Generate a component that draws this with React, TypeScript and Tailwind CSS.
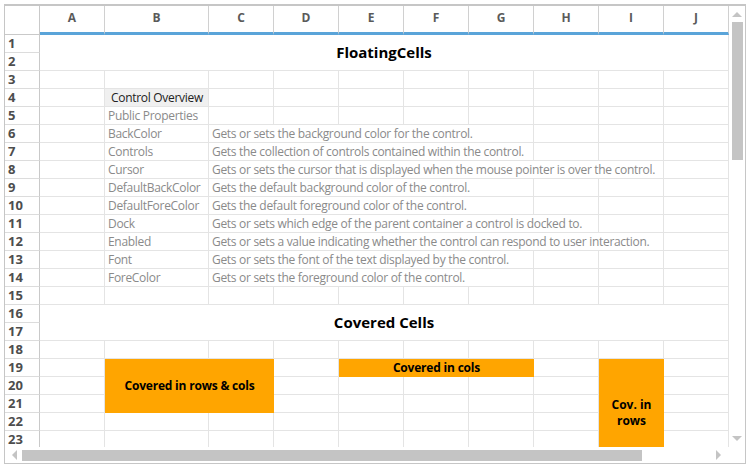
import React from "react";

const font = "font-['Segoe_UI','Open_Sans',sans-serif]";
const letters = ["A", "B", "C", "D", "E", "F", "G", "H", "I", "J"];

const props: [string, string, string][] = [
  ["BackColor", "Gets or sets the background color for the control.", "col-span-5"],
  ["Controls", "Gets the collection of controls contained within the control.", "col-span-5"],
  ["Cursor", "Gets or sets the cursor that is displayed when the mouse pointer is over the control.", "col-span-7"],
  ["DefaultBackColor", "Gets the default background color of the control.", "col-span-5"],
  ["DefaultForeColor", "Gets the default foreground color of the control.", "col-span-5"],
  ["Dock", "Gets or sets which edge of the parent container a control is docked to.", "col-span-6"],
  ["Enabled", "Gets or sets a value indicating whether the control can respond to user interaction.", "col-span-7"],
  ["Font", "Gets or sets the font of the text displayed by the control.", "col-span-5"],
  ["ForeColor", "Gets or sets the foreground color of the control.", "col-span-5"],
];
const spanLeft: Record<string, number> = { "col-span-5": 3, "col-span-6": 2, "col-span-7": 1 };

function RowHead({ n }: { n: number }) {
  return (
    <div className="flex items-center border-r border-b border-r-[#c9c9c9] border-b-[#dcdcdc] pl-[3px] text-[13px] font-bold text-[#4d4d4d]">
      {n}
    </div>
  );
}

function Cell({ className = "", children }: { className?: string; children?: React.ReactNode }) {
  return (
    <div className={`flex items-center border-r border-b border-[#e4e4e4] ${className}`}>{children}</div>
  );
}

function Empties({ count }: { count: number }) {
  return (
    <>
      {Array.from({ length: count }).map((_, i) => (
        <Cell key={i} />
      ))}
    </>
  );
}

function Tri({ dir }: { dir: "up" | "down" | "left" | "right" }) {
  const pts = {
    up: "0,5 5,0 10,5",
    down: "0,0 5,5 10,0",
    left: "5,0 0,5 5,10",
    right: "0,0 5,5 0,10",
  }[dir];
  const vertical = dir === "up" || dir === "down";
  return (
    <svg width={vertical ? 10 : 5} height={vertical ? 5 : 10} viewBox={vertical ? "0 0 10 5" : "0 0 5 10"}>
      <polygon points={pts} fill="#c4c4c4" />
    </svg>
  );
}

export default function App() {
  return (
    <div className={`w-[751px] h-[468px] bg-white pl-[4px] pt-[4px] ${font}`}>
      <div className="w-[742px] h-[460px] border border-t-2 border-[#c6c6c6] flex flex-col">
        <div className="flex h-[441px]">
          <div className="w-[724px] flex flex-col">
            {/* column header */}
            <div className="flex h-[29px] shrink-0">
              <div className="w-[35px] border-r border-b border-[#c9c9c9]" />
              {letters.map((l) => (
                <div
                  key={l}
                  className={`${l === "B" ? "w-[104px]" : "w-[65px]"} flex items-center justify-center border-r border-[#d0d0d0] border-b-[3px] border-b-[#5aa4d9] pb-[2px] text-[12px] font-bold text-[#5a5a5a]`}
                >
                  {l}
                </div>
              ))}
            </div>

            {/* sheet body */}
            <div className="flex-1 overflow-hidden">
              <div className="grid grid-cols-[35px_65px_104px_65px_65px_65px_65px_65px_65px_65px_65px] auto-rows-[18px] text-[12px]">
                <RowHead n={1} />
                <Cell className="col-span-10 row-span-2 justify-center text-[15px] font-bold text-black">
                  FloatingCells
                </Cell>
                <RowHead n={2} />

                <RowHead n={3} />
                <Empties count={10} />

                <RowHead n={4} />
                <Cell />
                <Cell className="bg-[#f0f0f0] pl-[6px] tracking-[-0.3px] text-[#222]">Control Overview</Cell>
                <Empties count={8} />

                <RowHead n={5} />
                <Cell />
                <Cell className="pl-[3px] tracking-[-0.3px] text-[#8a8a8a]">Public Properties</Cell>
                <Empties count={8} />

                {props.map(([name, desc, span], i) => (
                  <React.Fragment key={name}>
                    <RowHead n={6 + i} />
                    <Cell />
                    <Cell className="pl-[3px] tracking-[-0.3px] text-[#8a8a8a]">{name}</Cell>
                    <Cell className={`${span} pl-[3px] whitespace-nowrap tracking-[-0.3px] text-[#8a8a8a]`}>{desc}</Cell>
                    <Empties count={spanLeft[span]} />
                  </React.Fragment>
                ))}

                <RowHead n={15} />
                <Empties count={10} />

                <RowHead n={16} />
                <Cell className="col-span-10 row-span-2 justify-center text-[15px] font-bold text-black">
                  Covered Cells
                </Cell>
                <RowHead n={17} />

                <RowHead n={18} />
                <Empties count={10} />

                <RowHead n={19} />
                <Cell />
                <div className="col-span-2 row-span-3 flex items-center justify-center bg-[#ffa500] font-bold tracking-[-0.2px] text-black">
                  Covered in rows &amp; cols
                </div>
                <Cell />
                <div className="col-span-3 flex items-center justify-center bg-[#ffa500] font-bold tracking-[-0.2px] text-black">
                  Covered in cols
                </div>
                <Cell />
                <div className="row-span-6 flex items-center justify-center bg-[#ffa500] text-center font-bold leading-[16px] text-black">
                  Cov. in
                  <br />
                  rows
                </div>
                <Cell />

                <RowHead n={20} />
                <Empties count={7} />
                <RowHead n={21} />
                <Empties count={7} />
                <RowHead n={22} />
                <Empties count={9} />
                <RowHead n={23} />
                <Empties count={9} />
              </div>
            </div>
          </div>

          {/* vertical scrollbar */}
          <div className="w-[16px] flex flex-col items-center pt-[6px] pb-[6px]">
            <Tri dir="up" />
            <div className="mt-[5px] h-[138px] w-[11px] bg-[#c4c4c4]" />
            <div className="flex-1" />
            <Tri dir="down" />
          </div>
        </div>

        {/* horizontal scrollbar */}
        <div className="flex h-[17px] items-center pl-[7px]">
          <Tri dir="left" />
          <div className="ml-[5px] h-[11px] w-[620px] bg-[#c4c4c4]" />
          <div className="flex-1" />
          <div className="mr-[24px] flex">
            <Tri dir="right" />
          </div>
        </div>
      </div>
    </div>
  );
}
